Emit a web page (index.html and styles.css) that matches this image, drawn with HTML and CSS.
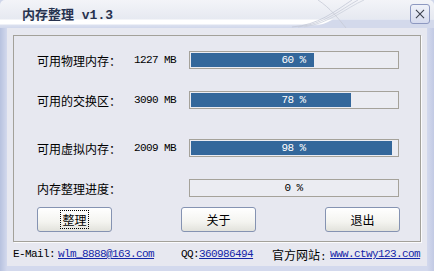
FILE: index.html
```html
<!DOCTYPE html>
<html lang="zh-CN">
<head>
    <meta charset="UTF-8">
    <title>内存整理 v1.3</title>
    <link rel="stylesheet" href="styles.css">
</head>
<body>
    <div class="window">
        <div class="titlebar">
            <svg class="swoosh" viewBox="0 0 434 28" width="434" height="28">
                <path d="M300 28 C 318 27, 326 23, 333 19.5 L 434 19.5 L 434 28 Z" fill="#d3d9eb"/>
                <path d="M292 27 C 318 25, 334 12, 352 0" fill="none" stroke="#c3c8d5" stroke-width="0.8"/>
                <path d="M298 27 C 324 24, 340 10, 358 0" fill="none" stroke="#c8ccd8" stroke-width="0.8"/>
                <path d="M304 27 C 330 23, 346 8, 364 0" fill="none" stroke="#ccd0dc" stroke-width="0.8"/>
                <path d="M318 0 C 330 8, 338 18, 346 28" fill="none" stroke="#c6cad6" stroke-width="0.8"/>
            </svg>
            <span class="title">内存整理<span class="ver"> v1.3</span></span>
            <span class="close">
                <svg viewBox="0 0 20 20" width="20" height="20">
                    <path d="M5.5 5.5 L14.5 14.5 M14.5 5.5 L5.5 14.5" stroke="#3a3f4c" stroke-width="1.2"/>
                </svg>
            </span>
        </div>
        <div class="frame">
            <div class="client">
                <div class="group">
                    <div class="stats">
                        <div class="row">
                            <span class="label">可用物理内存：</span>
                            <span class="value">1227 MB</span>
                            <div class="bar"><div class="fill" style="width: 60%"></div><span class="pct light">60 %</span></div>
                        </div>
                        <div class="row">
                            <span class="label">可用的交换区：</span>
                            <span class="value">3090 MB</span>
                            <div class="bar"><div class="fill" style="width: 78%"></div><span class="pct light">78 %</span></div>
                        </div>
                        <div class="row wide">
                            <span class="label">可用虚拟内存：</span>
                            <span class="value">2009 MB</span>
                            <div class="bar"><div class="fill" style="width: 98%"></div><span class="pct light">98 %</span></div>
                        </div>
                        <div class="row">
                            <span class="label">内存整理进度：</span>
                            <span class="value"></span>
                            <div class="bar"><div class="fill" style="width: 0%"></div><span class="pct">0 %</span></div>
                        </div>
                    </div>
                    <div class="actions">
                        <button class="btn focused"><span>整理</span></button>
                        <button class="btn"><span>关于</span></button>
                        <button class="btn"><span>退出</span></button>
                    </div>
                </div>
                <div class="footer">
                    <span class="mono">E-Mail:</span>
                    <a class="mono link mail" href="#">wlm_8888@163.com</a>
                    <span class="mono qq">QQ:</span>
                    <a class="mono link" href="#">360986494</a>
                    <span class="site">官方网站<span class="mono">:</span></span>
                    <a class="mono link web" href="#">www.ctwy123.com</a>
                </div>
            </div>
        </div>
    </div>
</body>
</html>
```

FILE: styles.css
```css
* {
    box-sizing: border-box;
}

body {
    margin: 0;
    width: 434px;
    height: 271px;
    overflow: hidden;
    font-family: "Noto Sans CJK SC", sans-serif;
    font-size: 12px;
    color: #000;
    background: #cfd6ea;
}

.window {
    width: 434px;
    height: 271px;
    display: flex;
    flex-direction: column;
}

/* title bar */
.titlebar {
    position: relative;
    height: 28px;
    flex: none;
    display: flex;
    align-items: flex-start;
    padding-top: 4px;
    background: linear-gradient(to bottom, #f3f4f8 0, #e6e9f1 19px, #ffffff 20px, #ffffff 24px, #dce1ef 25px, #d0d7eb 28px);
    border-radius: 5px 5px 0 0;
}

.swoosh {
    position: absolute;
    left: 0;
    top: 0;
}

.title {
    position: relative;
    margin-left: 22px;
    padding-top: 1px;
    line-height: 18px;
    font-size: 13px;
    font-weight: bold;
    color: #27324f;
}

.title .ver {
    font-family: "Liberation Mono", monospace;
    font-size: 13px;
}

.close {
    position: relative;
    margin-left: auto;
    margin-right: 4px;
    width: 20px;
    height: 20px;
    border: 1px solid #8d98c0;
    border-radius: 3px;
    background: linear-gradient(to bottom, #f0f2f9, #d6dbee);
    display: flex;
    align-items: center;
    justify-content: center;
}

.close svg {
    display: block;
}

/* window body */
.frame {
    flex: 1;
    display: flex;
    padding: 0 7px 5px 7px;
    background: linear-gradient(to right, #b7c2df 0, #d3d9ed 7px, #d3d9ed 427px, #c2cae4 434px);
}

.client {
    flex: 1;
    display: flex;
    flex-direction: column;
    padding: 7px 0 0 6px;
    background: #e7e8f0;
}

.group {
    width: 408px;
    height: 207px;
    border: 1px solid #a3a19a;
    box-shadow: 1px 1px 0 #fbfbfd;
}

.stats {
    display: flex;
    flex-direction: column;
    padding: 15px 0 0 23px;
}

.row {
    display: grid;
    grid-template-columns: 97px 55px 210px;
    align-items: center;
    height: 18px;
}

.row + .row {
    margin-top: 22px;
}

.row.wide {
    margin-top: 30px;
}

.value {
    font-family: "Liberation Mono", monospace;
    font-size: 11px;
    letter-spacing: -0.6px;
}

.bar {
    display: grid;
    height: 18px;
    border: 1px solid #a5a29a;
    padding: 1px 2px 1px 1px;
    background: #ebecf2;
}

.fill {
    grid-area: 1 / 1;
    height: 100%;
    background: #33679b;
}

.pct {
    grid-area: 1 / 1;
    justify-self: center;
    align-self: center;
    font-family: "Liberation Mono", monospace;
    font-size: 11px;
    letter-spacing: -0.6px;
    line-height: 14px;
    color: #000;
}

.pct.light {
    color: #fff;
}

/* buttons */
.actions {
    display: flex;
    justify-content: space-between;
    margin-top: 10px;
    padding: 0 20px 0 23px;
}

.btn {
    width: 75px;
    height: 25px;
    padding: 0;
    border: 1px solid #8593b2;
    border-radius: 3px;
    background: linear-gradient(to bottom, #ffffff 0, #f4f4f0 60%, #e2e2dc 100%);
    font-family: "Noto Sans CJK SC", sans-serif;
    font-size: 12px;
    color: #000;
}

.btn span {
    padding: 0 1px;
    line-height: 15px;
}

.btn.focused span {
    outline: 1px dotted #000;
}

/* footer */
.footer {
    display: flex;
    align-items: center;
    height: 24px;
}

.mono {
    font-family: "Liberation Mono", monospace;
    font-size: 11px;
    letter-spacing: -0.6px;
}

.link {
    color: #1426a8;
    text-decoration: underline;
}

.mail {
    margin-left: 3px;
}

.qq {
    margin-left: 27px;
}

.site {
    margin-left: 19px;
    color: #000;
}

.web {
    margin-left: 4px;
}
```
